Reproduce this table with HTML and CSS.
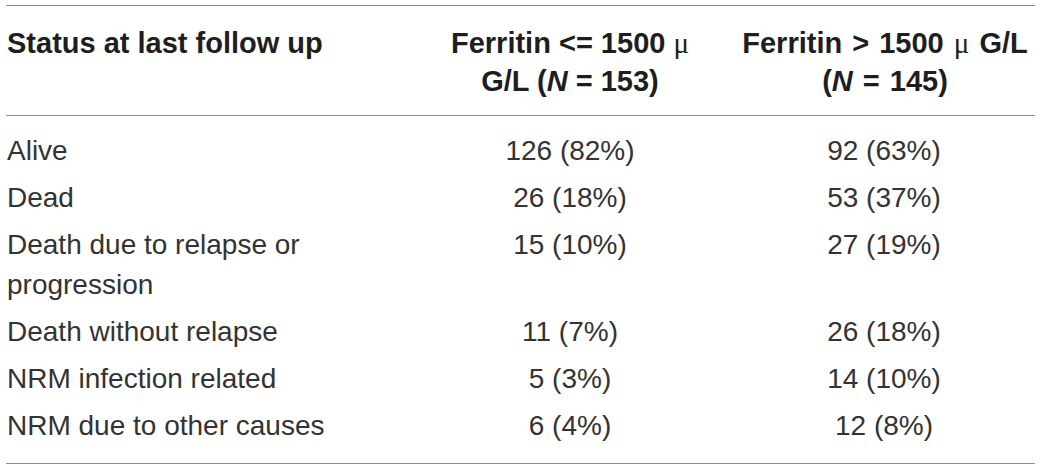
FILE: index.html
```html
<!DOCTYPE html>
<html lang="en">
<head>
<meta charset="utf-8">
<title>Status at last follow up</title>
<link rel="stylesheet" href="styles.css">
</head>
<body>
<table class="data-table">
  <colgroup>
    <col class="col-label">
    <col class="col-low">
    <col class="col-high">
  </colgroup>
  <thead>
    <tr>
      <th class="cell-label">Status at last follow up</th>
      <th class="cell-num cell-low">Ferritin &lt;= 1500 <span class="mu">μ</span> G/L (<i>N</i> = 153)</th>
      <th class="cell-num cell-high">Ferritin &gt; 1500 <span class="mu">μ</span> G/L (<i>N</i> = 145)</th>
    </tr>
  </thead>
  <tbody>
    <tr>
      <td class="cell-label">Alive</td>
      <td class="cell-num">126 (82%)</td>
      <td class="cell-num">92 (63%)</td>
    </tr>
    <tr>
      <td class="cell-label">Dead</td>
      <td class="cell-num">26 (18%)</td>
      <td class="cell-num">53 (37%)</td>
    </tr>
    <tr>
      <td class="cell-label">Death due to relapse or progression</td>
      <td class="cell-num">15 (10%)</td>
      <td class="cell-num">27 (19%)</td>
    </tr>
    <tr>
      <td class="cell-label">Death without relapse</td>
      <td class="cell-num">11 (7%)</td>
      <td class="cell-num">26 (18%)</td>
    </tr>
    <tr>
      <td class="cell-label">NRM infection related</td>
      <td class="cell-num">5 (3%)</td>
      <td class="cell-num">14 (10%)</td>
    </tr>
    <tr>
      <td class="cell-label">NRM due to other causes</td>
      <td class="cell-num">6 (4%)</td>
      <td class="cell-num">12 (8%)</td>
    </tr>
  </tbody>
</table>
</body>
</html>
```
FILE: styles.css
```css
html, body {
  margin: 0;
  padding: 0;
  background: #ffffff;
}

body {
  padding: 5px 5px 0 6px;
  font-family: "Liberation Sans", Arial, sans-serif;
  color: #333333;
}

.data-table {
  width: 1029px;
  border-collapse: collapse;
  table-layout: fixed;
  border-top: 1px solid #8c8c8c;
  border-bottom: 1px solid #8c8c8c;
}

.col-label { width: 401px; }
.col-low { width: 326px; }
.col-high { width: 302px; }

.data-table th {
  font-weight: bold;
  font-size: 29px;
  line-height: 38px;
  color: #1e1e1e;
  padding: 18px 0 15px;
  vertical-align: top;
  border-bottom: 1px solid #8c8c8c;
}

.data-table td {
  font-size: 28px;
  line-height: 40px;
  padding: 3px 0 4px;
  vertical-align: top;
}

.data-table tbody tr:first-child td {
  padding-top: 15px;
}

.data-table tbody tr:last-child td {
  padding-bottom: 17px;
}

.cell-label {
  text-align: left;
  padding-left: 1px !important;
}

.cell-num {
  text-align: center;
}

.cell-low {
  padding-left: 32px !important;
  padding-right: 32px !important;
}

.cell-high {
  padding-left: 2px !important;
  padding-right: 0 !important;
  word-spacing: 2px;
}

.mu {
  font-family: "Liberation Serif", "Times New Roman", serif;
  font-weight: normal;
}
```
